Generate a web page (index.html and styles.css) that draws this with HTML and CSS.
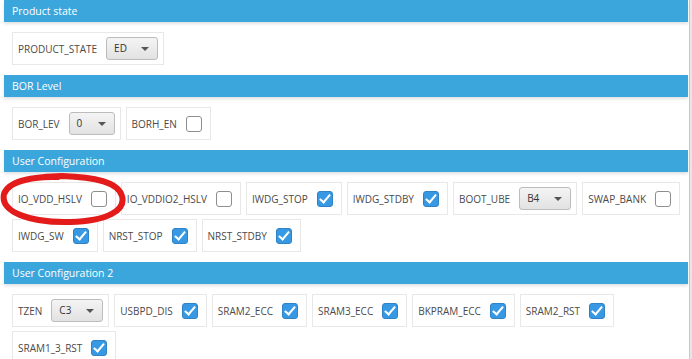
FILE: index.html
```html
<!DOCTYPE html>
<html lang="en">
<head>
  <meta charset="UTF-8">
  <title>Option bytes</title>
  <link rel="stylesheet" href="styles.css">
</head>
<body>
  <div class="panel">
    <div class="section">
      <div class="section-head">Product state</div>
      <div class="section-body">
        <div class="opt"><span>PRODUCT_STATE</span><div class="drop">ED</div></div>
      </div>
    </div>

    <div class="section">
      <div class="section-head">BOR Level</div>
      <div class="section-body">
        <div class="opt"><span>BOR_LEV</span><div class="drop narrow">0</div></div>
        <div class="opt"><span>BORH_EN</span><i class="check"></i></div>
      </div>
    </div>

    <div class="section">
      <div class="section-head">User Configuration</div>
      <div class="section-body">
        <div class="opt"><span>IO_VDD_HSLV</span><i class="check"></i></div>
        <div class="opt"><span>IO_VDDIO2_HSLV</span><i class="check"></i></div>
        <div class="opt"><span>IWDG_STOP</span><i class="check on"></i></div>
        <div class="opt"><span>IWDG_STDBY</span><i class="check on"></i></div>
        <div class="opt"><span>BOOT_UBE</span><div class="drop">B4</div></div>
        <div class="opt"><span>SWAP_BANK</span><i class="check"></i></div>
        <div class="opt"><span>IWDG_SW</span><i class="check on"></i></div>
        <div class="opt"><span>NRST_STOP</span><i class="check on"></i></div>
        <div class="opt"><span>NRST_STDBY</span><i class="check on"></i></div>
      </div>
    </div>

    <div class="section">
      <div class="section-head">User Configuration 2</div>
      <div class="section-body">
        <div class="opt"><span>TZEN</span><div class="drop">C3</div></div>
        <div class="opt"><span>USBPD_DIS</span><i class="check on"></i></div>
        <div class="opt"><span>SRAM2_ECC</span><i class="check on"></i></div>
        <div class="opt"><span>SRAM3_ECC</span><i class="check on"></i></div>
        <div class="opt"><span>BKPRAM_ECC</span><i class="check on"></i></div>
        <div class="opt"><span>SRAM2_RST</span><i class="check on"></i></div>
        <div class="opt"><span>SRAM1_3_RST</span><i class="check on"></i></div>
      </div>
    </div>
  </div>

  <div class="scrollbar"></div>

  <!-- red marker drawn over the first option -->
  <svg class="mark" width="130" height="56" viewBox="0 0 130 56">
    <path d="M58 5 C 30 4, 8 10, 4 22 C 0 40, 30 51, 70 50 C 108 49, 126 38, 122 24 C 118 10, 95 5, 62 4 C 40 4, 20 8, 14 12"
          fill="none" stroke="#e31b1b" stroke-width="6" stroke-linecap="round"/>
  </svg>
</body>
</html>
```

FILE: styles.css
```css
body {
  margin: 0;
  background: #fff;
  font-family: "Open Sans", "Noto Sans", sans-serif;
  overflow: hidden;
}
.panel {
  width: 684px;
  padding-left: 4px;
}
.section-head {
  height: 22px;
  line-height: 22px;
  background: #3ba6dc;
  color: #fff;
  font-size: 10.5px;
  padding-left: 8px;
  box-shadow: 0 2px 3px rgba(0, 0, 0, 0.12);
}
.section-body {
  display: flex;
  flex-wrap: wrap;
  gap: 4px 5px;
  padding: 10px 0 10px 8px;
}
.opt {
  display: flex;
  align-items: center;
  gap: 9px;
  height: 31px;
  padding: 0 5px 0 5px;
  border: 1px solid #e8e8e8;
  background: #fff;
  font-size: 10px;
  color: #4a4a4a;
}
.drop {
  position: relative;
  width: 43px;
  height: 21px;
  line-height: 21px;
  padding-left: 7px;
  border: 1px solid #bcbcbc;
  border-radius: 3px;
  background: linear-gradient(#f4f4f4, #e2e2e2);
  color: #333;
  font-size: 10px;
}
.drop.narrow {
  width: 37px;
}
.drop::after {
  content: "";
  position: absolute;
  right: 8px;
  top: 9px;
  border-left: 4px solid transparent;
  border-right: 4px solid transparent;
  border-top: 4px solid #555;
}
.check {
  position: relative;
  width: 14px;
  height: 14px;
  margin-right: 3px;
  border: 1px solid #8e8e8e;
  border-radius: 3px;
  background: #fff;
}
.check.on {
  background: #3799e3;
  border-color: #2f82c4;
}
.check.on::after {
  content: "";
  position: absolute;
  left: 4px;
  top: 0px;
  width: 4px;
  height: 9px;
  border-right: 2px solid #fff;
  border-bottom: 2px solid #fff;
  transform: rotate(40deg);
}
.scrollbar {
  position: absolute;
  top: 0;
  right: 0;
  width: 2px;
  height: 100%;
  background: #e6e6e6;
  border-left: 1px solid #c8c8c8;
}
.mark {
  position: absolute;
  left: 0;
  top: 172px;
}
```
